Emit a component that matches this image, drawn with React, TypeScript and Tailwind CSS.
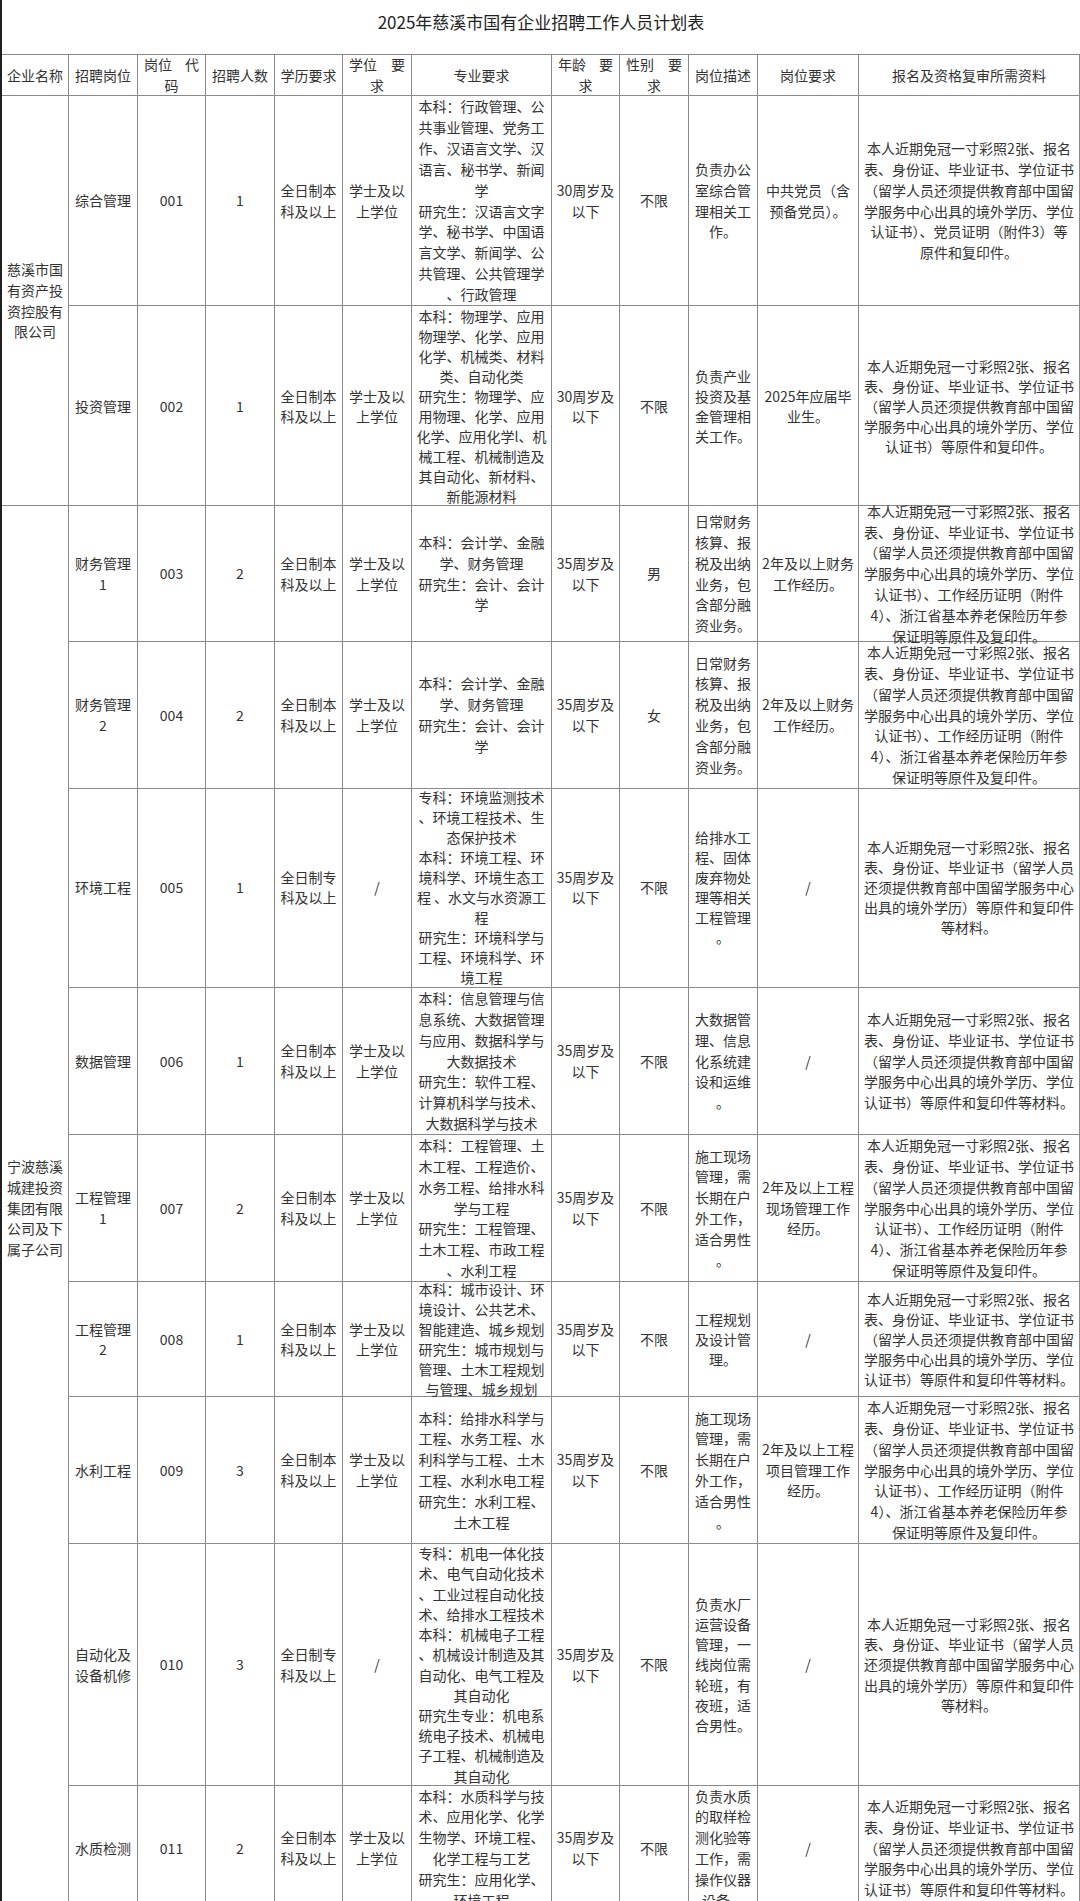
import React, { Fragment } from 'react';

const AGE30 = '30周岁及\n以下';
const AGE35 = '35周岁及\n以下';
const EDU_BK = '全日制本\n科及以上';
const EDU_ZK = '全日制专\n科及以上';
const DEG = '学士及以\n上学位';

const HEAD_DOCS = '本人近期免冠一寸彩照2张、报名\n表、身份证、毕业证书、学位证书\n（留学人员还须提供教育部中国留\n学服务中心出具的境外学历、学位\n';
const DOCS_PARTY = HEAD_DOCS + '认证书）、党员证明（附件3）等\n原件和复印件。';
const DOCS_PLAIN = HEAD_DOCS + '认证书）等原件和复印件。';
const DOCS_WORK = HEAD_DOCS + '认证书）、工作经历证明（附件\n4）、浙江省基本养老保险历年参\n保证明等原件及复印件。';
const DOCS_MORE = HEAD_DOCS + '认证书）等原件和复印件等材料。';
const DOCS_NODEG = '本人近期免冠一寸彩照2张、报名\n表、身份证、毕业证书（留学人员\n还须提供教育部中国留学服务中心\n出具的境外学历）等原件和复印件\n等材料。';

type Row = {
  pos: string;
  code: string;
  n: string;
  edu: string;
  deg: string;
  major: string;
  age: string;
  sex: string;
  desc: string;
  req: string;
  docs: string;
  lh: string;
};

const rows: Row[] = [
  {
    pos: '综合管理', code: '001', n: '1', edu: EDU_BK, deg: DEG,
    major: '本科：行政管理、公\n共事业管理、党务工\n作、汉语言文学、汉\n语言、秘书学、新闻\n学\n研究生：汉语言文字\n学、秘书学、中国语\n言文学、新闻学、公\n共管理、公共管理学\n、行政管理',
    age: AGE30, sex: '不限', desc: '负责办公\n室综合管\n理相关工\n作。', req: '中共党员（含\n预备党员）。',
    docs: DOCS_PARTY, lh: 'leading-[20.9px]',
  },
  {
    pos: '投资管理', code: '002', n: '1', edu: EDU_BK, deg: DEG,
    major: '本科：物理学、应用\n物理学、化学、应用\n化学、机械类、材料\n类、自动化类\n研究生：物理学、应\n用物理、化学、应用\n化学、应用化学l、机\n械工程、机械制造及\n其自动化、新材料、\n新能源材料',
    age: AGE30, sex: '不限', desc: '负责产业\n投资及基\n金管理相\n关工作。', req: '2025年应届毕\n业生。',
    docs: DOCS_PLAIN, lh: 'leading-[20px]',
  },
  {
    pos: '财务管理\n1', code: '003', n: '2', edu: EDU_BK, deg: DEG,
    major: '本科：会计学、金融\n学、财务管理\n研究生：会计、会计\n学',
    age: AGE35, sex: '男', desc: '日常财务\n核算、报\n税及出纳\n业务，包\n含部分融\n资业务。', req: '2年及以上财务\n工作经历。',
    docs: DOCS_WORK, lh: 'leading-[20.8px]',
  },
  {
    pos: '财务管理\n2', code: '004', n: '2', edu: EDU_BK, deg: DEG,
    major: '本科：会计学、金融\n学、财务管理\n研究生：会计、会计\n学',
    age: AGE35, sex: '女', desc: '日常财务\n核算、报\n税及出纳\n业务，包\n含部分融\n资业务。', req: '2年及以上财务\n工作经历。',
    docs: DOCS_WORK, lh: 'leading-[20.8px]',
  },
  {
    pos: '环境工程', code: '005', n: '1', edu: EDU_ZK, deg: '/',
    major: '专科：环境监测技术\n、环境工程技术、生\n态保护技术\n本科：环境工程、环\n境科学、环境生态工\n程 、水文与水资源工\n程\n研究生：环境科学与\n工程、环境科学、环\n境工程',
    age: AGE35, sex: '不限', desc: '给排水工\n程、固体\n废弃物处\n理等相关\n工程管理\n。', req: '/',
    docs: DOCS_NODEG, lh: 'leading-[19.9px]',
  },
  {
    pos: '数据管理', code: '006', n: '1', edu: EDU_BK, deg: DEG,
    major: '本科：信息管理与信\n息系统、大数据管理\n与应用、数据科学与\n大数据技术\n研究生：软件工程、\n计算机科学与技术、\n大数据科学与技术',
    age: AGE35, sex: '不限', desc: '大数据管\n理、信息\n化系统建\n设和运维\n。', req: '/',
    docs: DOCS_MORE, lh: 'leading-[20.8px]',
  },
  {
    pos: '工程管理\n1', code: '007', n: '2', edu: EDU_BK, deg: DEG,
    major: '本科：工程管理、土\n木工程、工程造价、\n水务工程、给排水科\n学与工程\n研究生：工程管理、\n土木工程、市政工程\n、水利工程',
    age: AGE35, sex: '不限', desc: '施工现场\n管理，需\n长期在户\n外工作，\n适合男性\n。', req: '2年及以上工程\n现场管理工作\n经历。',
    docs: DOCS_WORK, lh: 'leading-[20.8px]',
  },
  {
    pos: '工程管理\n2', code: '008', n: '1', edu: EDU_BK, deg: DEG,
    major: '本科：城市设计、环\n境设计、公共艺术、\n智能建造、城乡规划\n研究生：城市规划与\n管理、土木工程规划\n与管理、城乡规划',
    age: AGE35, sex: '不限', desc: '工程规划\n及设计管\n理。', req: '/',
    docs: DOCS_MORE, lh: 'leading-[20px]',
  },
  {
    pos: '水利工程', code: '009', n: '3', edu: EDU_BK, deg: DEG,
    major: '本科：给排水科学与\n工程、水务工程、水\n利科学与工程、土木\n工程、水利水电工程\n研究生：水利工程、\n土木工程',
    age: AGE35, sex: '不限', desc: '施工现场\n管理，需\n长期在户\n外工作，\n适合男性\n。', req: '2年及以上工程\n项目管理工作\n经历。',
    docs: DOCS_WORK, lh: 'leading-[20.8px]',
  },
  {
    pos: '自动化及\n设备机修', code: '010', n: '3', edu: EDU_ZK, deg: '/',
    major: '专科：机电一体化技\n术、电气自动化技术\n、工业过程自动化技\n术、给排水工程技术\n本科：机械电子工程\n、机械设计制造及其\n自动化、电气工程及\n其自动化\n研究生专业：机电系\n统电子技术、机械电\n子工程、机械制造及\n其自动化',
    age: AGE35, sex: '不限', desc: '负责水厂\n运营设备\n管理，一\n线岗位需\n轮班，有\n夜班，适\n合男性。', req: '/',
    docs: DOCS_NODEG, lh: 'leading-[20.2px]',
  },
  {
    pos: '水质检测', code: '011', n: '2', edu: EDU_BK, deg: DEG,
    major: '本科：水质科学与技\n术、应用化学、化学\n生物学、环境工程、\n化学工程与工艺\n研究生：应用化学、\n环境工程',
    age: AGE35, sex: '不限', desc: '负责水质\n的取样检\n测化验等\n工作，需\n操作仪器\n设备。', req: '/',
    docs: DOCS_MORE, lh: 'leading-[20.8px]',
  },
];

const Cell: React.FC<{ text: string; lh: string; className?: string }> = ({ text, lh, className = '' }) => (
  <div
    className={`min-h-0 min-w-0 border-r border-b border-[#8a8a8a] flex flex-col items-center justify-center text-center whitespace-nowrap ${lh} ${className}`}
  >
    {text.split('\n').map((line, i) => (
      <span key={i} className="block">
        {line}
      </span>
    ))}
  </div>
);

const SplitHead: React.FC<{ a: string }> = ({ a }) => (
  <div className="min-h-0 border-r border-b border-[#8a8a8a] flex flex-col items-center justify-center leading-[20.6px] whitespace-nowrap">
    <div className="flex w-full justify-between px-[6px]">
      <span>{a}</span>
      <span>{a === '岗位' ? '代' : '要'}</span>
    </div>
    <span>{a === '岗位' ? '码' : '求'}</span>
  </div>
);

const App: React.FC = () => {
  return (
    <div className="w-[1080px] h-[1901px] overflow-hidden bg-white border-l-2 border-[#1f1f1f] font-['Noto_Sans_CJK_SC','Noto_Sans',sans-serif] text-[14px] text-[#333]">
      {/* title */}
      <div className="h-[55px] border-b border-[#8a8a8a] pt-[11px] text-center text-[17px] leading-[22px] text-[#222]">
        2025年慈溪市国有企业招聘工作人员计划表
      </div>

      <div className="grid grid-cols-[67px_69px_68px_69px_68px_69px_140px_68px_69px_69px_101px_221px] grid-rows-[41px_210px_200px_136px_147px_199px_147px_147px_115px_147px_242px_125px]">
        {/* header */}
        <Cell text="企业名称" lh="leading-[21px]" />
        <Cell text="招聘岗位" lh="leading-[21px]" />
        <SplitHead a="岗位" />
        <Cell text="招聘人数" lh="leading-[21px]" />
        <Cell text="学历要求" lh="leading-[21px]" />
        <SplitHead a="学位" />
        <Cell text="专业要求" lh="leading-[21px]" />
        <SplitHead a="年龄" />
        <SplitHead a="性别" />
        <Cell text="岗位描述" lh="leading-[21px]" />
        <Cell text="岗位要求" lh="leading-[21px]" />
        <Cell text="报名及资格复审所需资料" lh="leading-[21px]" />

        {rows.map((r, i) => (
          <Fragment key={r.code}>
            {i === 0 && (
              <Cell text={'慈溪市国\n有资产投\n资控股有\n限公司'} lh="leading-[20.8px]" className="row-span-2" />
            )}
            {i === 2 && (
              <Cell
                text={'宁波慈溪\n城建投资\n集团有限\n公司及下\n属子公司'}
                lh="leading-[20.8px]"
                className="row-span-9"
              />
            )}
            <Cell text={r.pos} lh={r.lh} />
            <Cell text={r.code} lh={r.lh} />
            <Cell text={r.n} lh={r.lh} />
            <Cell text={r.edu} lh={r.lh} />
            <Cell text={r.deg} lh={r.lh} />
            <Cell text={r.major} lh={r.lh} />
            <Cell text={r.age} lh={r.lh} />
            <Cell text={r.sex} lh={r.lh} />
            <Cell text={r.desc} lh={r.lh} />
            <Cell text={r.req} lh={r.lh} />
            <Cell text={r.docs} lh={r.lh} />
          </Fragment>
        ))}
      </div>
    </div>
  );
};

export default App;
